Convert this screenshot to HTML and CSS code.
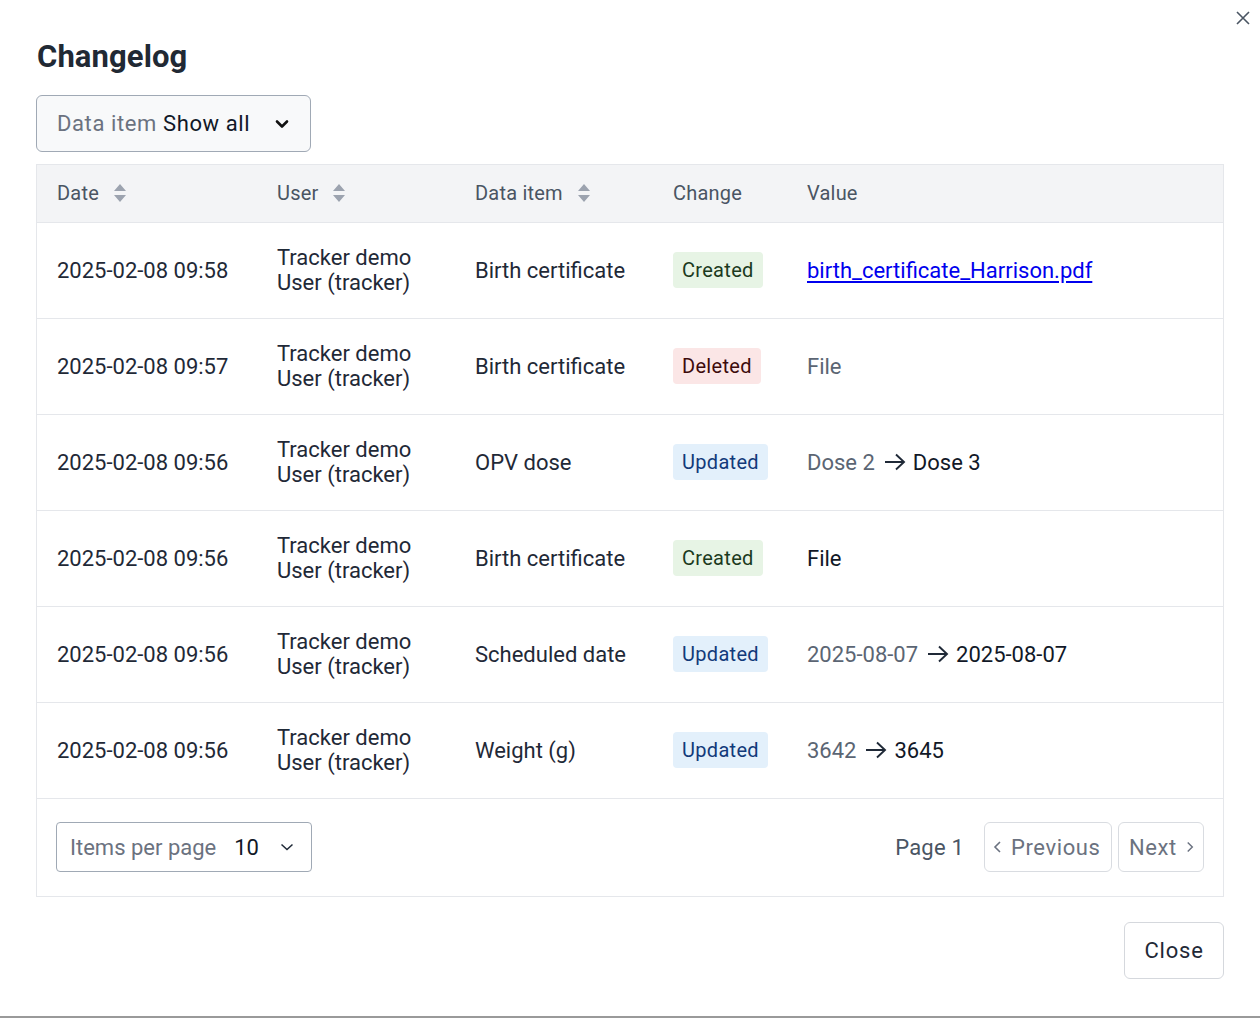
FILE: index.html
```html
<!DOCTYPE html>
<html lang="en">
<head>
<meta charset="utf-8">
<title>Changelog</title>
<link rel="stylesheet" href="styles.css">
</head>
<body>
<div class="modal">
  <button class="close-x" aria-label="Close">
    <svg width="16" height="16" viewBox="0 0 16 16"><path d="M2 2L14 14M14 2L2 14" stroke="#4a5563" stroke-width="1.6" fill="none"/></svg>
  </button>
  <h1 class="title">Changelog</h1>
  <button class="filter">
    <span class="filter-text"><span class="filter-label">Data item</span> <span class="filter-value">Show all</span></span>
    <svg class="filter-chev" width="14" height="10" viewBox="0 0 14 10"><path d="M2 2.5L7 7.5L12 2.5" stroke="#111" stroke-width="2.6" fill="none" stroke-linecap="round" stroke-linejoin="round"/></svg>
  </button>
  <div class="table-wrap">
    <table class="log">
      <colgroup>
        <col class="c-date"><col class="c-user"><col class="c-item"><col class="c-change"><col>
      </colgroup>
      <thead>
        <tr>
          <th><span class="th-in">Date <svg class="sort" width="14" height="20" viewBox="0 0 14 20"><path d="M7 1L13 8H1Z M7 19L13 12H1Z" fill="#9ca3af"/></svg></span></th>
          <th><span class="th-in">User <svg class="sort" width="14" height="20" viewBox="0 0 14 20"><path d="M7 1L13 8H1Z M7 19L13 12H1Z" fill="#9ca3af"/></svg></span></th>
          <th><span class="th-in">Data item <svg class="sort" width="14" height="20" viewBox="0 0 14 20"><path d="M7 1L13 8H1Z M7 19L13 12H1Z" fill="#9ca3af"/></svg></span></th>
          <th>Change</th>
          <th>Value</th>
        </tr>
      </thead>
      <tbody>
        <tr>
          <td>2025-02-08 09:58</td>
          <td>Tracker demo<br>User (tracker)</td>
          <td>Birth certificate</td>
          <td><span class="badge created">Created</span></td>
          <td><a href="#" class="file-link">birth_certificate_Harrison.pdf</a></td>
        </tr>
        <tr>
          <td>2025-02-08 09:57</td>
          <td>Tracker demo<br>User (tracker)</td>
          <td>Birth certificate</td>
          <td><span class="badge deleted">Deleted</span></td>
          <td><span class="old">File</span></td>
        </tr>
        <tr>
          <td>2025-02-08 09:56</td>
          <td>Tracker demo<br>User (tracker)</td>
          <td>OPV dose</td>
          <td><span class="badge updated">Updated</span></td>
          <td><span class="old">Dose 2</span><svg class="arrow" width="24" height="20" viewBox="0 0 24 20"><path d="M2 10H21M13 2.5L21 10L13 17.5" stroke="#1f2937" stroke-width="1.9" fill="none"/></svg><span class="new">Dose 3</span></td>
        </tr>
        <tr>
          <td>2025-02-08 09:56</td>
          <td>Tracker demo<br>User (tracker)</td>
          <td>Birth certificate</td>
          <td><span class="badge created">Created</span></td>
          <td><span class="new">File</span></td>
        </tr>
        <tr>
          <td>2025-02-08 09:56</td>
          <td>Tracker demo<br>User (tracker)</td>
          <td>Scheduled date</td>
          <td><span class="badge updated">Updated</span></td>
          <td><span class="old">2025-08-07</span><svg class="arrow" width="24" height="20" viewBox="0 0 24 20"><path d="M2 10H21M13 2.5L21 10L13 17.5" stroke="#1f2937" stroke-width="1.9" fill="none"/></svg><span class="new">2025-08-07</span></td>
        </tr>
        <tr>
          <td>2025-02-08 09:56</td>
          <td>Tracker demo<br>User (tracker)</td>
          <td>Weight (g)</td>
          <td><span class="badge updated">Updated</span></td>
          <td><span class="old">3642</span><svg class="arrow" width="24" height="20" viewBox="0 0 24 20"><path d="M2 10H21M13 2.5L21 10L13 17.5" stroke="#1f2937" stroke-width="1.9" fill="none"/></svg><span class="new">3645</span></td>
        </tr>
      </tbody>
    </table>
    <div class="pager">
      <button class="per-page">
        <span class="pp-label">Items per page</span>
        <span class="pp-value">10</span>
        <svg width="14" height="10" viewBox="0 0 14 10"><path d="M1.5 2.5L7 7.5L12.5 2.5" stroke="#1f2937" stroke-width="1.5" fill="none"/></svg>
      </button>
      <div class="pager-right">
        <span class="page-no">Page 1</span>
        <button class="pg-btn prev">
          <svg width="10" height="14" viewBox="0 0 10 14"><path d="M7 2L2 7L7 12" stroke="#6b7280" stroke-width="1.6" fill="none"/></svg>
          Previous
        </button>
        <button class="pg-btn next">
          Next
          <svg width="10" height="14" viewBox="0 0 10 14"><path d="M3 2L8 7L3 12" stroke="#6b7280" stroke-width="1.6" fill="none"/></svg>
        </button>
      </div>
    </div>
  </div>
  <div class="actions">
    <button class="close-btn">Close</button>
  </div>
</div>
</body>
</html>
```
FILE: styles.css
```css
* { box-sizing: border-box; }
html, body { margin: 0; padding: 0; background: #fff; }
body {
  font-family: Roboto, "Noto Sans", "Liberation Sans", sans-serif;
  color: #1f2937;
  height: 1018px;
  overflow: hidden;
}
.modal {
  position: relative;
  height: 1018px;
  padding: 38px 36px 0 36px;
  border-bottom: 2px solid #9a9a9a;
}
.close-x {
  position: absolute;
  top: 10px;
  right: 9px;
  border: 0;
  background: transparent;
  padding: 0;
  width: 16px;
  height: 16px;
  display: flex;
}
.title {
  margin: 0 0 20px 1px;
  font-size: 31px;
  line-height: 37px;
  font-weight: 700;
  color: #212934;
  letter-spacing: 0.1px;
}
.filter {
  display: flex;
  align-items: center;
  height: 57px;
  width: 275px;
  padding: 0 20px;
  background: #f8f9fa;
  border: 1px solid #a0a9b5;
  border-radius: 6px;
  font-family: inherit;
  font-size: 22px;
  letter-spacing: 0.6px;
  color: #1f2937;
}
.filter-text { white-space: pre; }
.filter-label { color: #6b7280; }
.filter-value { color: #111827; }
.filter-chev { margin-left: auto; margin-right: 1px; }
.table-wrap {
  margin-top: 12px;
  border: 1px solid #e5e7eb;
}
.log {
  width: 100%;
  border-collapse: collapse;
  table-layout: fixed;
}
.c-date { width: 220px; }
.c-user { width: 198px; }
.c-item { width: 198px; }
.c-change { width: 134px; }
.log th {
  background: #f3f4f6;
  height: 57px;
  padding: 0 0 0 20px;
  text-align: left;
  font-weight: 400;
  font-size: 20px;
  letter-spacing: 0.2px;
  color: #4a5563;
  border-bottom: 1px solid #e5e7eb;
}
.th-in { display: inline-flex; align-items: center; gap: 14px; }
.sort { display: block; }
.log td {
  height: 96px;
  padding: 0 0 0 20px;
  font-size: 22px;
  line-height: 25px;
  color: #1f2937;
  border-bottom: 1px solid #e5e7eb;
  vertical-align: middle;
}
.badge {
  display: inline-block;
  padding: 5px 9px;
  border-radius: 4px;
  font-size: 20px;
  line-height: 26px;
  letter-spacing: 0.3px;
}
.created { background: #e7f4e5; color: #1b3a1d; }
.deleted { background: #fbe6e6; color: #3d0b0b; }
.updated { background: #e3f0fb; color: #123a7a; }
.file-link { color: #0000ee; text-decoration: underline; text-underline-offset: 3px; }
.old { color: #5b6573; }
.new { color: #111827; }
.arrow { vertical-align: -2px; margin: 0 6px 0 8px; }
.pager {
  display: flex;
  align-items: center;
  justify-content: space-between;
  height: 97px;
  padding: 0 19px;
}
.per-page {
  display: flex;
  align-items: center;
  width: 256px;
  height: 50px;
  padding: 0 13px;
  background: #fff;
  border: 1px solid #a0a9b5;
  border-radius: 4px;
  font-family: inherit;
  font-size: 22px;
  letter-spacing: 0;
}
.pp-label { color: #6b7280; }
.pp-value { color: #111827; margin-left: 18px; }
.per-page svg { margin-left: auto; margin-right: 4px; }
.pager-right { display: flex; align-items: center; gap: 6px; }
.page-no { font-size: 22px; color: #4a5563; margin-right: 14px; letter-spacing: 0.2px; }
.pg-btn {
  display: flex;
  align-items: center;
  gap: 8px;
  height: 50px;
  padding: 0 9px;
  background: #fff;
  border: 1px solid #d9dce1;
  border-radius: 6px;
  font-family: inherit;
  font-size: 22px;
  letter-spacing: 0.6px;
  color: #6b7280;
}
.prev { width: 128px; padding-left: 8px; }
.next { width: 86px; padding-left: 10px; }
.actions {
  display: flex;
  justify-content: flex-end;
  margin-top: 25px;
}
.close-btn {
  width: 100px;
  height: 57px;
  background: #fff;
  border: 1px solid #d5d8dd;
  border-radius: 6px;
  font-family: inherit;
  font-size: 22px;
  letter-spacing: 0.8px;
  color: #1f2937;
}
```
